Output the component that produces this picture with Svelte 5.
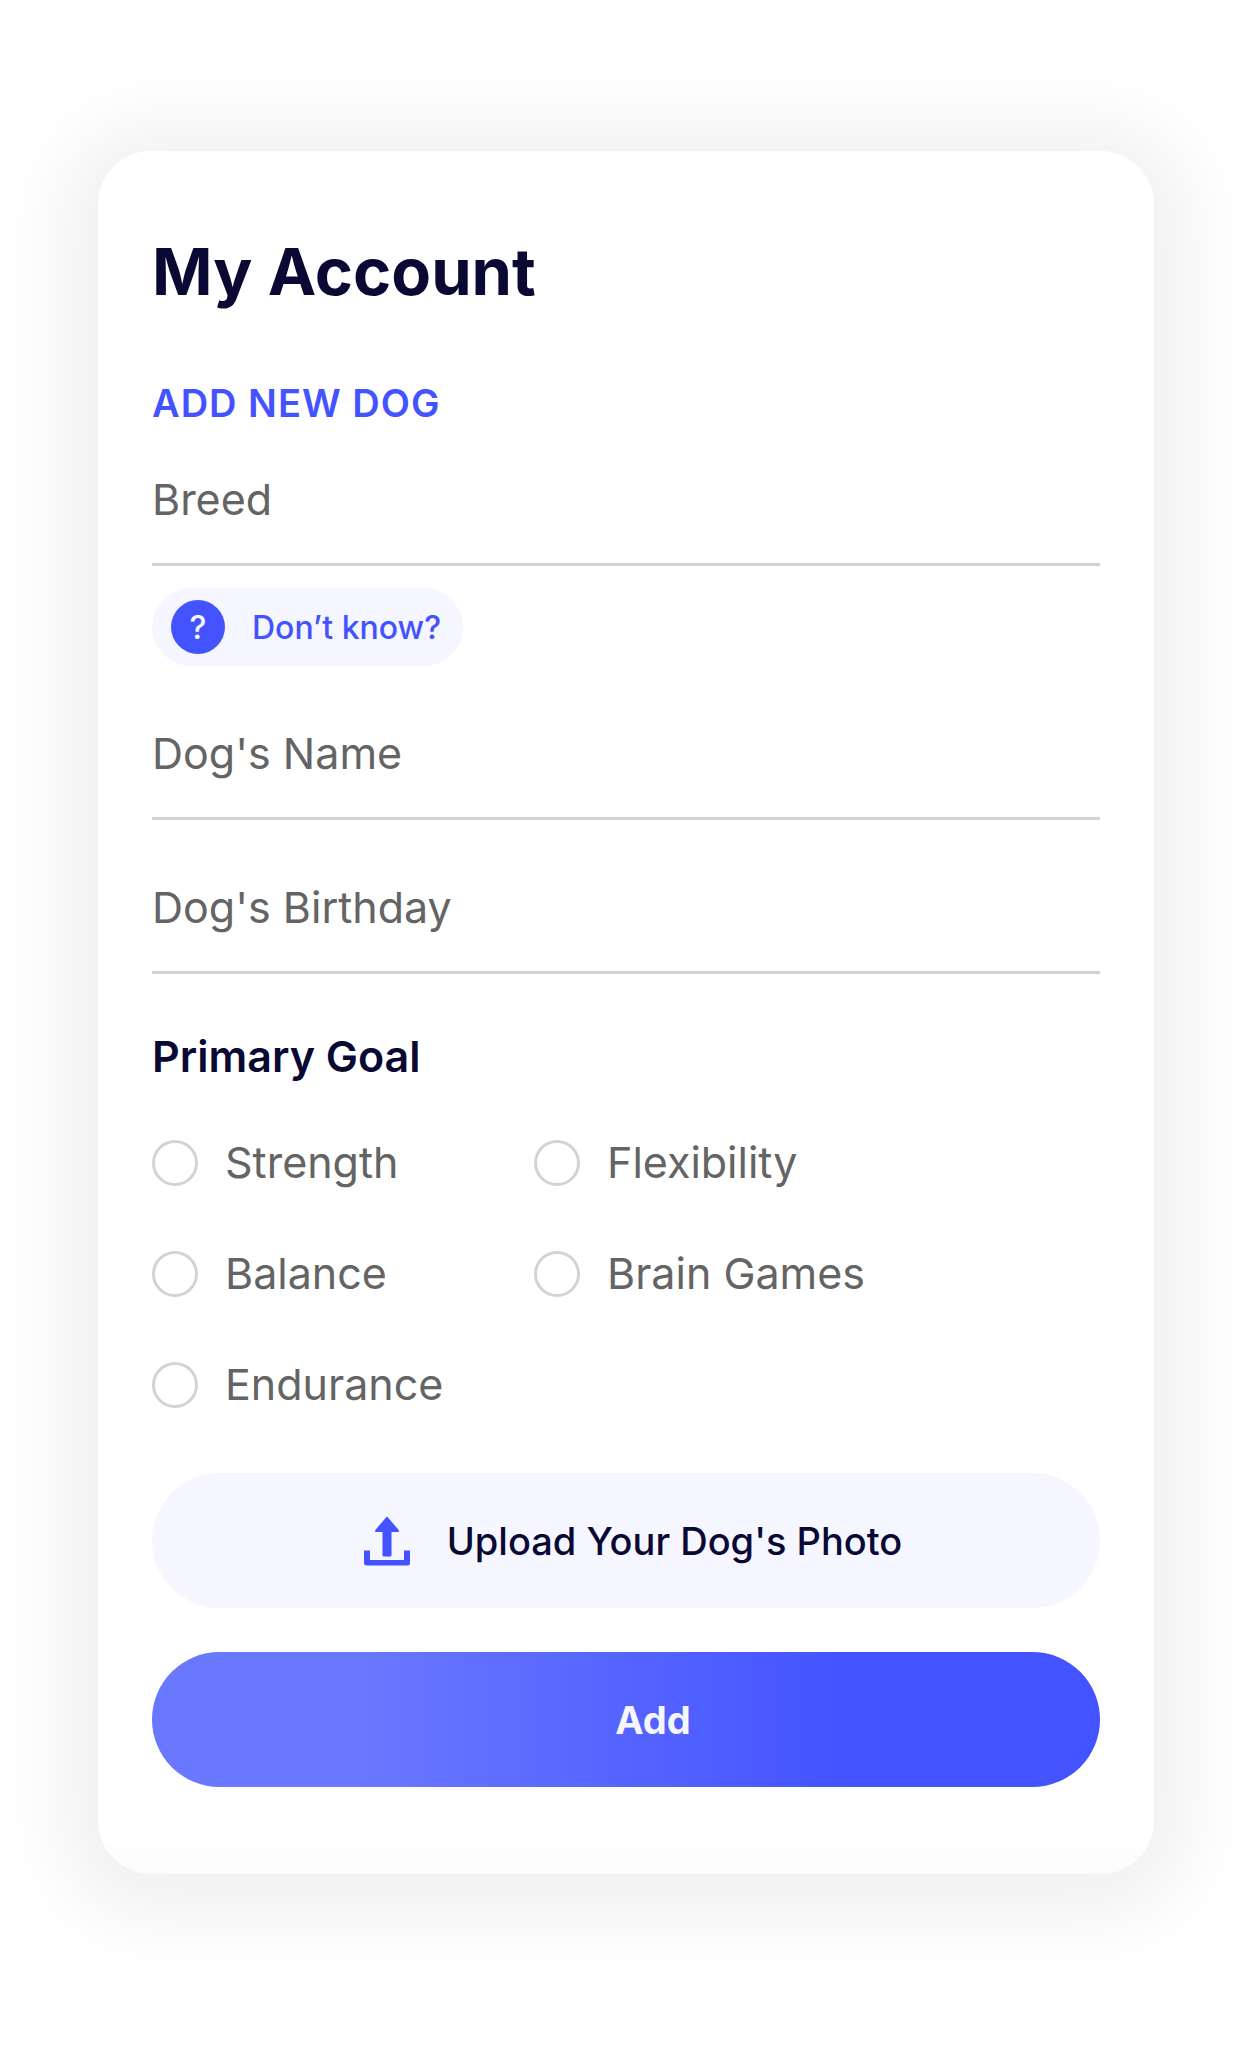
<script>
  const goals = ['Strength', 'Flexibility', 'Balance', 'Brain Games', 'Endurance'];
  let breed = $state('');
  let name = $state('');
  let birthday = $state('');
  let goal = $state('');
  let fileInput;
</script>

<main>
  <form class="card" onsubmit={(e) => e.preventDefault()}>
    <h1>My Account</h1>
    <h2>ADD NEW DOG</h2>

    <input class="field first" type="text" aria-label="Breed" placeholder="Breed" bind:value={breed} />
    <button class="chip" type="button">
      <span class="mark" aria-hidden="true">?</span>
      <span>Don’t know?</span>
    </button>
    <input class="field" type="text" aria-label="Dog's Name" placeholder="Dog's Name" bind:value={name} />
    <input class="field" type="text" aria-label="Dog's Birthday" placeholder="Dog's Birthday" bind:value={birthday} />

    <fieldset>
      <legend>Primary Goal</legend>
      <div class="goals">
        {#each goals as item}
          <label>
            <input type="radio" name="goal" value={item} bind:group={goal} />
            <span>{item}</span>
          </label>
        {/each}
      </div>
    </fieldset>

    <input class="file" type="file" accept="image/*" aria-label="Photo" hidden bind:this={fileInput} />
    <button class="wide upload" type="button" onclick={() => fileInput.click()}>
      <svg width="46" height="50" viewBox="0 0 46 50" aria-hidden="true">
        <path d="M22 1.400q1-1.200 2 0L34.600 14q1.200 2-.8 2H27.500v23q0 1.500-1.500 1.500h-6q-1.500 0-1.500-1.500V16h-6.300q-2 0-.8-2z" />
        <path d="M0 34.500h6V44h34v-9.500h6V47q0 2.500-2.500 2.500h-41Q0 49.500 0 47z" />
      </svg>
      <span>Upload Your Dog's Photo</span>
    </button>
    <button class="wide add" type="submit">Add</button>
  </form>
</main>

<style>
  :global(body) {
    margin: 0;
    background: #fff;
  }
  main {
    padding: 151px 98px 174px;
    font-family: Inter, 'Liberation Sans', sans-serif;
    color: #090934;
  }
  .card {
    display: flex;
    flex-direction: column;
    padding: 81px 54px 87px;
    border-radius: 54px;
    background: linear-gradient(to bottom, #fff calc(100% - 36px), #fcfcfc);
    box-shadow: 0 8px 76px 36px rgba(0, 0, 0, 0.058);
  }
  h1,
  h2 {
    margin: 0;
  }
  h1 {
    font-size: 65px;
    line-height: 80px;
    font-weight: 700;
  }
  h2 {
    margin-top: 68px;
    font-size: 38px;
    line-height: 46px;
    font-weight: 600;
    letter-spacing: 1px;
    color: #4353ff;
  }
  input,
  button {
    font-family: inherit;
  }
  .field {
    box-sizing: border-box;
    width: 100%;
    height: 93px;
    margin: 61px 0 0;
    padding: 0 0 38px;
    border: 0;
    border-bottom: 3px solid #d3d3d3;
    border-radius: 0;
    outline: 0;
    background: transparent;
    font-size: 43px;
    line-height: 52px;
    color: #646464;
  }
  .field.first {
    margin-top: 47px;
  }
  .field::placeholder {
    color: #646464;
    opacity: 1;
  }
  .chip {
    display: flex;
    align-items: center;
    align-self: flex-start;
    gap: 27px;
    height: 78px;
    margin: 22px 0 0;
    padding: 0 22px 0 19px;
    border: 0;
    border-radius: 39px;
    background: #f5f6ff;
    font-size: 32px;
    font-weight: 500;
    color: #4353ff;
  }
  .mark {
    display: flex;
    align-items: center;
    justify-content: center;
    width: 54px;
    height: 54px;
    border-radius: 50%;
    background: #4353ff;
    color: #f5f6ff;
  }
  fieldset {
    min-width: 0;
    margin: 56px 0 0;
    padding: 0;
    border: 0;
  }
  legend {
    padding: 0;
    font-size: 43px;
    line-height: 52px;
    font-weight: 600;
  }
  .goals {
    display: grid;
    grid-template-columns: 382px 1fr;
    row-gap: 57px;
    margin-top: 54px;
  }
  label {
    display: flex;
    align-items: center;
    gap: 27px;
    font-size: 43px;
    line-height: 52px;
    color: #646464;
  }
  label span {
    padding-bottom: 2px;
  }
  label input {
    appearance: none;
    box-sizing: border-box;
    flex: none;
    width: 46px;
    height: 46px;
    margin: 0;
    border: 3px solid #d3d3d3;
    border-radius: 50%;
  }
  label input:checked {
    border: 13px solid #4353ff;
  }
  .wide {
    display: flex;
    align-items: center;
    justify-content: center;
    width: 100%;
    height: 135px;
    border: 0;
    border-radius: 68px;
    font-size: 38px;
  }
  .upload {
    gap: 37px;
    margin: 61px 0 0;
    padding: 0 0 0 14px;
    background: #f5f6ff;
    font-weight: 500;
    color: #090934;
  }
  .upload svg {
    fill: #4353ff;
  }
  .add {
    margin: 44px 0 0;
    padding: 0 0 0 54px;
    background: linear-gradient(to right, #6a78ff 22%, #4353ff 74%);
    font-weight: 700;
    color: #f5f6ff;
  }
</style>
